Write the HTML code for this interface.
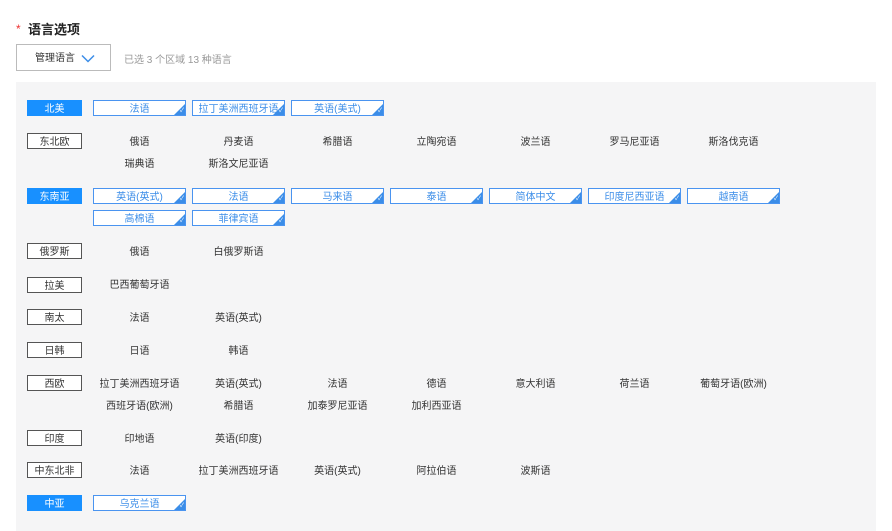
<!DOCTYPE html><html><head><meta charset="utf-8"><style>
body{margin:0;width:892px;height:531px;background:#fff;font-family:"Liberation Sans","Noto Sans CJK SC",sans-serif;position:relative;overflow:hidden;font-size:10px;color:#333}
.a{position:absolute}
.t{position:absolute;font-size:13px;font-weight:bold;left:28px;top:19px;color:#222}
.st{position:absolute;left:16px;top:22px;color:#e33;font-size:12px}
.btn{position:absolute;left:16px;top:44px;width:95px;height:27px;border:1px solid #bbb;box-sizing:border-box;font-size:10px;display:flex;align-items:center;padding-left:18px;padding-bottom:2px;color:#333}
.panel{position:absolute;left:16px;top:82px;width:860px;height:449px;background:#f5f5f6}
.l,.g,.p{display:flex;align-items:center;justify-content:center;white-space:nowrap;box-sizing:border-box;height:16px;padding-bottom:2px}
.l{position:absolute;left:27px;width:55px;border:1px solid #555;background:#fff;color:#333}
.l.s{background:#1890ff;border-color:#1890ff;color:#fff}
.g{position:absolute;width:93px;border:1px solid #4a94f0;background:#fff;color:#3b8de8;overflow:hidden}
.g:after{content:"";position:absolute;right:0;bottom:0;border-style:solid;border-width:0 0 11px 11px;border-color:transparent transparent #3b8de8 transparent}
.g:before{content:"✓";position:absolute;right:1px;bottom:0px;color:#fff;font-size:6px;z-index:2;line-height:7px}
.p{position:absolute;width:93px;color:#333}
</style></head><body>
<div class="st">*</div><div class="t">语言选项</div>
<div class="btn">管理语言<svg class="a" style="left:64px;top:9px" width="14" height="9" viewBox="0 0 14 9"><path d="M1 1.5L7 7.5L13 1.5" fill="none" stroke="#3b8de8" stroke-width="1.5"/></svg></div>
<div class="a" style="left:124px;top:51px;color:#999">已选 3 个区域 13 种语言</div>
<div class="panel"></div>

<div class="l s" style="top:100px">北美</div>
<div class="g" style="left:93px;top:100px">法语</div><div class="g" style="left:192px;top:100px">拉丁美洲西班牙语</div><div class="g" style="left:291px;top:100px">英语(美式)</div>

<div class="l" style="top:133px">东北欧</div>
<div class="p" style="left:93px;top:133px">俄语</div><div class="p" style="left:192px;top:133px">丹麦语</div><div class="p" style="left:291px;top:133px">希腊语</div><div class="p" style="left:390px;top:133px">立陶宛语</div><div class="p" style="left:489px;top:133px">波兰语</div><div class="p" style="left:588px;top:133px">罗马尼亚语</div><div class="p" style="left:687px;top:133px">斯洛伐克语</div>
<div class="p" style="left:93px;top:155px">瑞典语</div><div class="p" style="left:192px;top:155px">斯洛文尼亚语</div>

<div class="l s" style="top:188px">东南亚</div>
<div class="g" style="left:93px;top:188px">英语(英式)</div><div class="g" style="left:192px;top:188px">法语</div><div class="g" style="left:291px;top:188px">马来语</div><div class="g" style="left:390px;top:188px">泰语</div><div class="g" style="left:489px;top:188px">简体中文</div><div class="g" style="left:588px;top:188px">印度尼西亚语</div><div class="g" style="left:687px;top:188px">越南语</div>
<div class="g" style="left:93px;top:210px">高棉语</div><div class="g" style="left:192px;top:210px">菲律宾语</div>

<div class="l" style="top:243px">俄罗斯</div>
<div class="p" style="left:93px;top:243px">俄语</div><div class="p" style="left:192px;top:243px">白俄罗斯语</div>

<div class="l" style="top:277px">拉美</div>
<div class="p" style="left:93px;top:276px">巴西葡萄牙语</div>

<div class="l" style="top:309px">南太</div>
<div class="p" style="left:93px;top:309px">法语</div><div class="p" style="left:192px;top:309px">英语(英式)</div>

<div class="l" style="top:342px">日韩</div>
<div class="p" style="left:93px;top:342px">日语</div><div class="p" style="left:192px;top:342px">韩语</div>

<div class="l" style="top:375px">西欧</div>
<div class="p" style="left:93px;top:375px">拉丁美洲西班牙语</div><div class="p" style="left:192px;top:375px">英语(英式)</div><div class="p" style="left:291px;top:375px">法语</div><div class="p" style="left:390px;top:375px">德语</div><div class="p" style="left:489px;top:375px">意大利语</div><div class="p" style="left:588px;top:375px">荷兰语</div><div class="p" style="left:687px;top:375px">葡萄牙语(欧洲)</div>
<div class="p" style="left:93px;top:397px">西班牙语(欧洲)</div><div class="p" style="left:192px;top:397px">希腊语</div><div class="p" style="left:291px;top:397px">加泰罗尼亚语</div><div class="p" style="left:390px;top:397px">加利西亚语</div>

<div class="l" style="top:430px">印度</div>
<div class="p" style="left:93px;top:430px">印地语</div><div class="p" style="left:192px;top:430px">英语(印度)</div>

<div class="l" style="top:462px">中东北非</div>
<div class="p" style="left:93px;top:462px">法语</div><div class="p" style="left:192px;top:462px">拉丁美洲西班牙语</div><div class="p" style="left:291px;top:462px">英语(英式)</div><div class="p" style="left:390px;top:462px">阿拉伯语</div><div class="p" style="left:489px;top:462px">波斯语</div>

<div class="l s" style="top:495px">中亚</div>
<div class="g" style="left:93px;top:495px">乌克兰语</div>
</body></html>
